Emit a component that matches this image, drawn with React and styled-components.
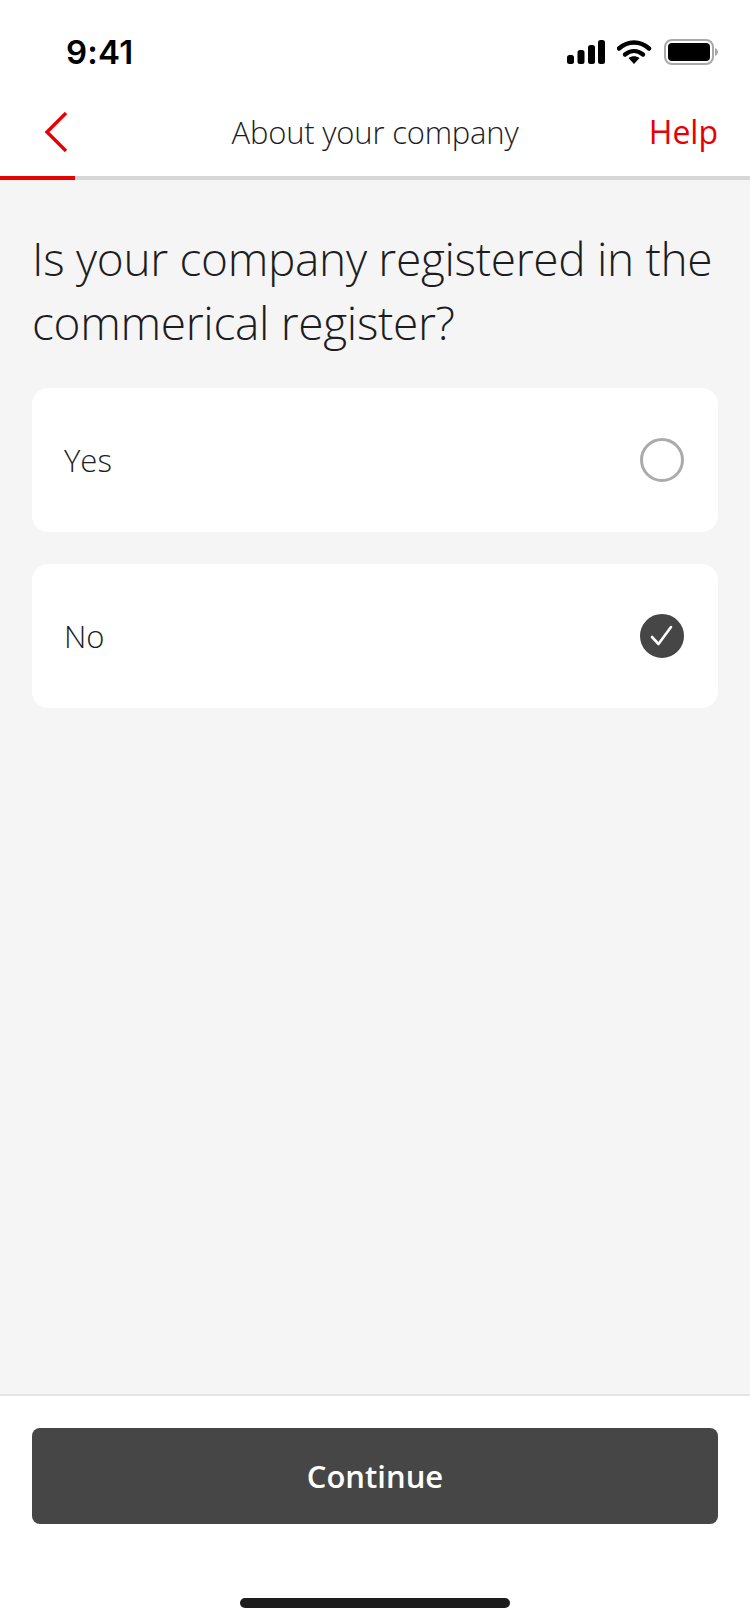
import React from 'react'
import styled, { createGlobalStyle } from 'styled-components'

const GlobalStyle = createGlobalStyle`
  html, body {
    margin: 0;
    padding: 0;
    background: #ffffff;
  }
  * {
    box-sizing: border-box;
  }
`

const Screen = styled.div`
  width: 750px;
  height: 1624px;
  display: flex;
  flex-direction: column;
  background: #f5f5f5;
  font-family: 'Open Sans', 'Noto Sans', sans-serif;
  color: #1d1d1f;
`

const StatusBar = styled.div`
  height: 88px;
  flex: none;
  background: #ffffff;
  display: flex;
  align-items: flex-end;
  justify-content: space-between;
  padding: 0 32px 16px 66px;
`

const Clock = styled.span`
  font-family: 'Inter', 'Liberation Sans', sans-serif;
  font-size: 33px;
  line-height: 40px;
  font-weight: 600;
  letter-spacing: 0.2px;
  color: #000000;
`

const StatusIcons = styled.div`
  display: flex;
  align-items: center;
  gap: 12px;
  padding-bottom: 7px;
`

const NavBar = styled.div`
  height: 88px;
  flex: none;
  background: #ffffff;
  display: grid;
  grid-template-columns: 1fr auto 1fr;
  align-items: center;
  padding: 0 32px;
`

const BackButton = styled.div`
  display: flex;
  align-items: center;
  padding-left: 12px;
`

const NavTitle = styled.div`
  font-size: 31px;
  font-weight: 300;
  line-height: 44px;
  letter-spacing: -0.2px;
`

const HelpLink = styled.div`
  justify-self: end;
  font-size: 32px;
  font-weight: 400;
  line-height: 44px;
  color: #e60000;
`

const ProgressTrack = styled.div`
  height: 4px;
  flex: none;
  background: #d7d7d7;
`

const ProgressFill = styled.div`
  height: 100%;
  background: #e60000;
`

const Content = styled.main`
  flex: 1;
  padding: 46px 32px 0;
`

const Question = styled.h1`
  margin: 0 0 34px;
  font-size: 46px;
  font-weight: 300;
  line-height: 64px;
  letter-spacing: -0.32px;
`

const OptionList = styled.div`
  display: flex;
  flex-direction: column;
  gap: 32px;
`

const OptionCard = styled.div`
  height: 144px;
  background: #ffffff;
  border-radius: 16px;
  display: flex;
  align-items: center;
  justify-content: space-between;
  padding: 0 34px 0 32px;
`

const OptionLabel = styled.span`
  font-size: 31px;
  font-weight: 300;
  line-height: 40px;
`

const Radio = styled.span`
  width: 44px;
  height: 44px;
  border-radius: 50%;
  border: 3px solid ${({ $checked }) => ($checked ? '#464646' : '#ababab')};
  background: ${({ $checked }) => ($checked ? '#464646' : '#ffffff')};
  display: flex;
  align-items: center;
  justify-content: center;
`

const Footer = styled.footer`
  height: 230px;
  flex: none;
  background: #ffffff;
  border-top: 2px solid #e5e5e5;
  padding: 32px 32px 0;
  display: flex;
  flex-direction: column;
  align-items: center;
`

const ContinueButton = styled.button`
  width: 100%;
  height: 96px;
  border: 0;
  border-radius: 8px;
  background: #464646;
  color: #ffffff;
  font-family: inherit;
  font-size: 31px;
  font-weight: 600;
`

const HomeIndicator = styled.div`
  width: 270px;
  height: 10px;
  margin-top: 74px;
  border-radius: 5px;
  background: #1c1c1c;
`

const SignalIcon = () => (
  <svg width="38" height="24" viewBox="0 0 38 24">
    <rect x="0" y="15" width="7" height="9" rx="2.5" fill="#000" />
    <rect x="10.5" y="10" width="7" height="14" rx="2.5" fill="#000" />
    <rect x="21" y="5" width="7" height="19" rx="2.5" fill="#000" />
    <rect x="31" y="0" width="7" height="24" rx="2.5" fill="#000" />
  </svg>
)

const WifiIcon = () => (
  <svg width="35" height="24" viewBox="0 0 35 24">
    <path d="M2 8.5 C11 0.5 23 0.5 32 8.5" fill="none" stroke="#000" strokeWidth="4.4" strokeLinecap="round" />
    <path d="M8 14.5 C13.5 10 20.5 10 26 14.5" fill="none" stroke="#000" strokeWidth="4.4" strokeLinecap="round" />
    <path d="M11.5 18 C15 15.5 19 15.5 22.5 18 L17 24 Z" fill="#000" />
  </svg>
)

const BatteryIcon = () => (
  <svg width="54" height="26" viewBox="0 0 54 26">
    <rect x="1" y="1" width="48" height="24" rx="7" fill="none" stroke="#a9a9a9" strokeWidth="2" />
    <rect x="4" y="4" width="42" height="18" rx="4" fill="#000" />
    <path d="M51 9 C53 10 54 11.5 54 13 C54 14.5 53 16 51 17 Z" fill="#a9a9a9" />
  </svg>
)

const BackIcon = () => (
  <svg width="24" height="40" viewBox="0 0 24 40">
    <path d="M22 1 L3 20 L22 39" fill="none" stroke="#e60000" strokeWidth="3.4" />
  </svg>
)

const CheckIcon = () => (
  <svg width="24" height="24" viewBox="0 0 24 24">
    <path d="M2 13 L8.5 20 L21 3" fill="none" stroke="#fff" strokeWidth="2.6" strokeLinecap="round" strokeLinejoin="round" />
  </svg>
)

const options = [
  { label: 'Yes', checked: false },
  { label: 'No', checked: true },
]

const App = () => {
  return (
    <Screen>
      <GlobalStyle />
      <StatusBar>
        <Clock>9:41</Clock>
        <StatusIcons>
          <SignalIcon />
          <WifiIcon />
          <BatteryIcon />
        </StatusIcons>
      </StatusBar>
      <NavBar>
        <BackButton>
          <BackIcon />
        </BackButton>
        <NavTitle>About your company</NavTitle>
        <HelpLink>Help</HelpLink>
      </NavBar>
      <ProgressTrack>
        <ProgressFill style={{ width: `${(1 / 10) * 100}%` }} />
      </ProgressTrack>
      <Content>
        <Question>Is your company registered in the commerical register?</Question>
        <OptionList>
          {options.map(({ label, checked }) => (
            <OptionCard key={label}>
              <OptionLabel>{label}</OptionLabel>
              <Radio $checked={checked}>{checked && <CheckIcon />}</Radio>
            </OptionCard>
          ))}
        </OptionList>
      </Content>
      <Footer>
        <ContinueButton>Continue</ContinueButton>
        <HomeIndicator />
      </Footer>
    </Screen>
  )
}

export default App
